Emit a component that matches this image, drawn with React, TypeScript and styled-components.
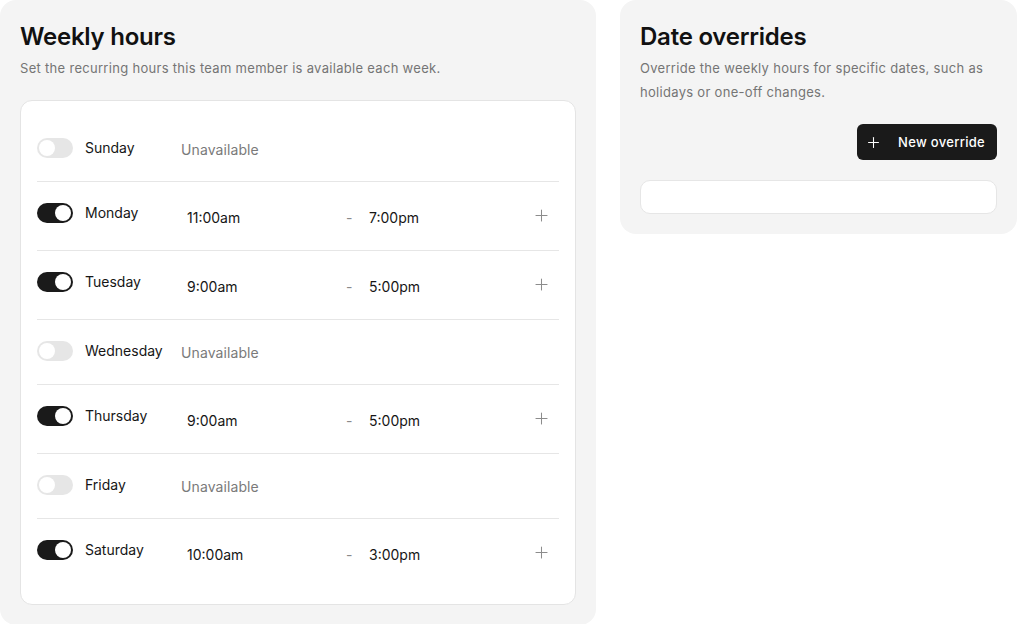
import React from "react";
import styled, { createGlobalStyle } from "styled-components";
import { Plus } from "lucide-react";

const GlobalStyle = createGlobalStyle`
    html, body {
        margin: 0;
        padding: 0;
        background: #ffffff;
    }
    body {
        font-family: Inter, "Noto Sans", sans-serif;
        color: #111111;
        -webkit-font-smoothing: antialiased;
    }
`;

const Page = styled.div`
    display: flex;
    align-items: flex-start;
    gap: 24px;
    width: 1017px;
`;

const Panel = styled.section<{ $width: number }>`
    width: ${(p) => p.$width}px;
    flex-shrink: 0;
    box-sizing: border-box;
    padding: 20px;
    background: #f4f4f4;
    border-radius: 16px;
`;

const Title = styled.h2`
    margin: 0 0 4px;
    padding-top: 1px;
    font-size: 24px;
    line-height: 31px;
    font-weight: 600;
    letter-spacing: -0.01em;
    color: #111111;
`;

const Subtitle = styled.p`
    margin: 0 0 20px;
    font-size: 13px;
    line-height: 24px;
    letter-spacing: 0.3px;
    color: #757575;
`;

const Card = styled.div`
    background: #ffffff;
    border: 1px solid #e4e4e4;
    border-radius: 12px;
    padding: 16px 16px 17px;
`;

const Row = styled.div`
    display: flex;
    align-items: flex-start;
    padding: 21px 0 23px;
    border-bottom: 1px solid #e6e6e6;
    &:last-child {
        border-bottom: none;
    }
`;

const Toggle = styled.span<{ $on: boolean }>`
    position: relative;
    width: 36px;
    height: 20px;
    border-radius: 10px;
    flex-shrink: 0;
    background: ${(p) => (p.$on ? "#1a1a1a" : "#e6e6e6")};
    &::after {
        content: "";
        position: absolute;
        top: 2px;
        left: ${(p) => (p.$on ? "18px" : "2px")};
        width: 16px;
        height: 16px;
        border-radius: 50%;
        background: #ffffff;
    }
`;

const DayLabel = styled.span`
    width: 96px;
    margin-left: 12px;
    font-size: 14px;
    line-height: 20px;
    color: #161616;
`;

const Muted = styled.span`
    padding-top: 3px;
    font-size: 14px;
    line-height: 17px;
    letter-spacing: 0.1px;
    color: #7a7a7a;
`;

const TimeGroup = styled.div`
    display: flex;
    align-items: center;
    flex: 1;
    height: 24px;
    padding-top: 6px;
    box-sizing: border-box;
`;

const TimeValue = styled.span<{ $pad: number }>`
    width: 160px;
    padding-left: ${(p) => p.$pad}px;
    box-sizing: border-box;
    font-size: 14px;
    line-height: 18px;
    color: #161616;
`;

const Dash = styled.span`
    width: 20px;
    padding-left: 5px;
    box-sizing: border-box;
    font-size: 14px;
    line-height: 18px;
    color: #8a8a8a;
`;

const AddButton = styled.span`
    margin-left: auto;
    margin-top: -5px;
    margin-right: 8px;
    display: flex;
    color: #8c8c8c;
`;

const Actions = styled.div`
    display: flex;
    justify-content: flex-end;
    margin-bottom: 20px;
`;

const PrimaryButton = styled.button`
    display: flex;
    align-items: center;
    gap: 16px;
    height: 36px;
    padding: 0 12px 0 8px;
    border: none;
    border-radius: 6px;
    background: #1a1a1a;
    color: #ffffff;
    font-family: Inter, sans-serif;
    font-size: 13px;
    font-weight: 500;
    letter-spacing: 0.3px;
`;

const EmptyList = styled.div`
    height: 34px;
    box-sizing: border-box;
    background: #ffffff;
    border: 1px solid #e6e6e6;
    border-radius: 10px;
`;

type Day = { name: string; from?: string; to?: string };

const days: Day[] = [
    { name: "Sunday" },
    { name: "Monday", from: "11:00am", to: "7:00pm" },
    { name: "Tuesday", from: "9:00am", to: "5:00pm" },
    { name: "Wednesday" },
    { name: "Thursday", from: "9:00am", to: "5:00pm" },
    { name: "Friday" },
    { name: "Saturday", from: "10:00am", to: "3:00pm" },
];

const App = () => {
    return (
        <Page>
            <GlobalStyle />
            <Panel $width={596}>
                <Title>Weekly hours</Title>
                <Subtitle>Set the recurring hours this team member is available each week.</Subtitle>
                <Card>
                    {days.map((d) => {
                        const on = !!d.from;
                        return (
                            <Row key={d.name}>
                                <Toggle $on={on} />
                                <DayLabel>{d.name}</DayLabel>
                                {on ? (
                                    <TimeGroup>
                                        <TimeValue $pad={6}>{d.from}</TimeValue>
                                        <Dash>-</Dash>
                                        <TimeValue $pad={8}>{d.to}</TimeValue>
                                        <AddButton>
                                            <Plus size={19} strokeWidth={1.3} />
                                        </AddButton>
                                    </TimeGroup>
                                ) : (
                                    <Muted>Unavailable</Muted>
                                )}
                            </Row>
                        );
                    })}
                </Card>
            </Panel>
            <Panel $width={397}>
                <Title>Date overrides</Title>
                <Subtitle>
                    Override the weekly hours for specific dates, such as holidays or one-off changes.
                </Subtitle>
                <Actions>
                    <PrimaryButton>
                        <Plus size={17} strokeWidth={1.5} />
                        New override
                    </PrimaryButton>
                </Actions>
                <EmptyList />
            </Panel>
        </Page>
    );
};

export default App;
